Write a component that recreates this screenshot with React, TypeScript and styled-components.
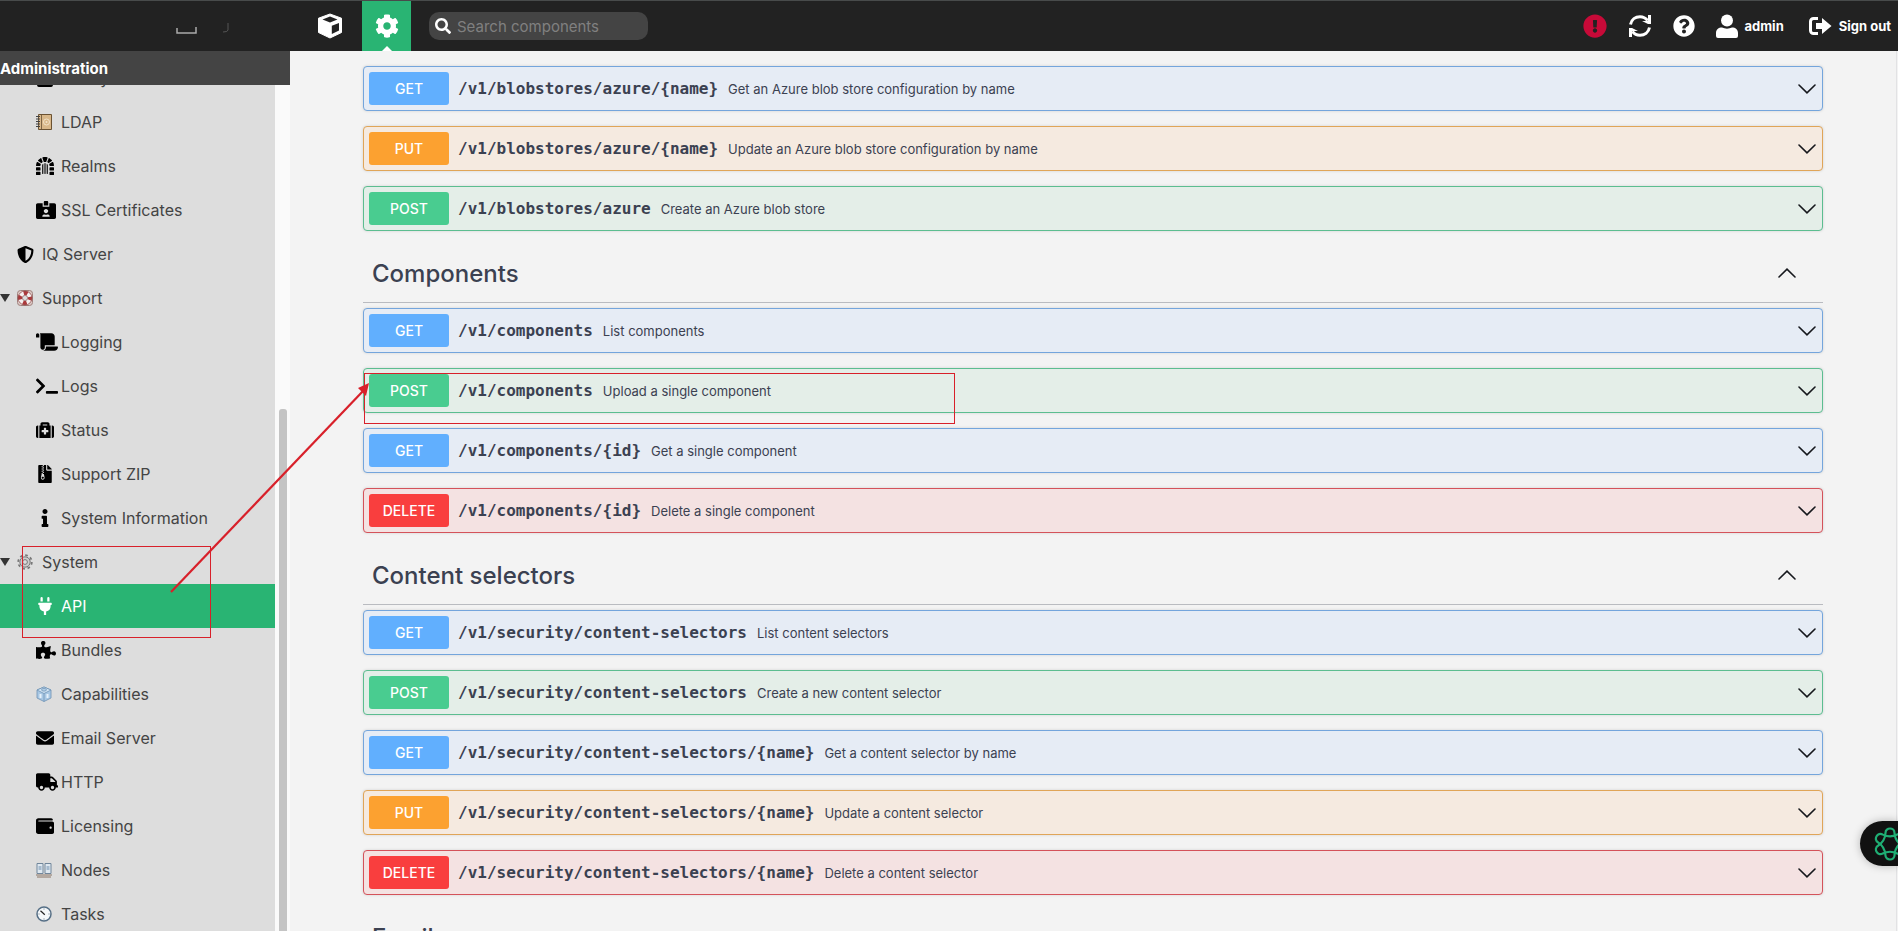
import React from 'react';
import styled, { createGlobalStyle } from 'styled-components';
import {
  FaUser, FaDungeon, FaIdCardAlt, FaShieldAlt, FaScroll, FaTerminal, FaMedkit, FaFileArchive, FaInfo,
  FaPlug, FaPuzzlePiece, FaEnvelope, FaTruck, FaWallet, FaCog, FaSearch, FaExclamationCircle,
  FaQuestionCircle,
} from 'react-icons/fa';

const UI = `Inter, 'Liberation Sans', sans-serif`;
const ACCENT = '#29b473';
const MARK = '#d8202a';

const Global = createGlobalStyle`
  * { box-sizing: border-box; }
  body { margin: 0; background: #f3f3f3; color: #3b4151; font-family: ${UI}; overflow: hidden; }
  button { font: inherit; color: inherit; border: 0; background: none; padding: 0; cursor: pointer; }
`;

const Shell = styled.div`
  position: relative;
  display: grid;
  grid-template-rows: 51px minmax(0, 1fr);
  height: 100vh;
`;

const TopBar = styled.header`
  display: flex;
  align-items: stretch;
  background: #222;
  border-top: 1px solid #484b4b;
  color: #fff;
`;

const Brand = styled.div`
  width: 298px;
  flex: none;
  padding: 8px 0 0 168px;
`;

const ModeTab = styled.button<{ $active?: boolean }>`
  display: flex;
  position: relative;
  width: ${(p) => (p.$active ? 49 : 64)}px;
  align-items: center;
  justify-content: center;
  background: ${(p) => (p.$active ? ACCENT : 'transparent')};
  color: #fff;
  ${(p) => p.$active && `&::after {
    content: '';
    position: absolute;
    bottom: 0;
    border: 5px solid transparent;
    border-top: 0;
    border-bottom-color: #fff;
  }`}
`;

const Search = styled.label`
  display: flex;
  align-items: center;
  align-self: center;
  gap: 6px;
  width: 219px;
  height: 28px;
  margin-left: 18px;
  padding-left: 6px;
  border-radius: 10px;
  background: #444;
`;

const SearchInput = styled.input`
  flex: 1;
  min-width: 0;
  border: 0;
  outline: 0;
  padding: 0;
  background: transparent;
  color: #fff;
  font: 15px ${UI};
  &::placeholder { color: #808080; opacity: 1; }
`;

const Actions = styled.div`
  display: flex;
  align-items: center;
  gap: 21px;
  margin-left: auto;
  padding-right: 7px;
`;

const Action = styled.button`
  display: flex;
  align-items: center;
  gap: 7px;
  font-size: 13px;
  font-weight: 700;
  white-space: nowrap;
  &:last-child { margin-left: 4px; }
`;

const Body = styled.div`
  display: grid;
  grid-template-columns: 290px minmax(0, 1fr);
  min-height: 0;
`;

const Side = styled.aside`
  display: grid;
  grid-template-rows: 34px minmax(0, 1fr);
  min-height: 0;
  background: #fafafa;
`;

const SideTitle = styled.h1`
  margin: 0;
  background: #444;
  color: #fff;
  font-size: 15px;
  font-weight: 700;
  line-height: 36px;
`;

const SideBody = styled.div`
  display: grid;
  grid-template-columns: 275px 8px;
  gap: 4px;
  overflow: hidden;
`;

const NavList = styled.ul`
  margin: -29px 0 0;
  padding: 0;
  list-style: none;
  background: #ddd;
`;

const NavLink = styled.a<{ $top: boolean; $active?: boolean }>`
  display: flex;
  align-items: center;
  height: 44px;
  padding-left: ${(p) => (p.$top ? 0 : 36)}px;
  background: ${(p) => (p.$active ? ACCENT : 'transparent')};
  color: ${(p) => (p.$active ? '#fff' : '#444')};
  font-size: 16px;
  text-decoration: none;
`;

const Twisty = styled.span`
  width: 17px;
  color: #333;
  display: flex;
`;

const NavIcon = styled.span<{ $dark: boolean }>`
  display: flex;
  width: 25px;
  flex: none;
  color: ${(p) => (p.$dark ? '#000' : '#fff')};
`;

const Thumb = styled.div`
  margin-top: 324px;
  border-radius: 3px 3px 0 0;
  background: #c4c4c4;
`;

const Main = styled.main`
  overflow: hidden;
  margin-right: 1px;
  padding: 15px 73px 0;
  border-right: 1px solid #e2e2e4;
`;

const Group = styled.section`
  margin: 0 0 15px;
`;

const GroupHead = styled.h2`
  display: flex;
  align-items: center;
  justify-content: space-between;
  height: 57px;
  margin: 0 0 5px;
  padding: 0 27px 2px 9px;
  border-bottom: 1px solid #b9bbc0;
  font-size: 24px;
  font-weight: 500;
`;

const Operations = styled.div`
  display: flex;
  flex-direction: column;
  gap: 15px;
`;

const Operation = styled.button<{ $line: string; $fill: string }>`
  display: flex;
  align-items: center;
  width: 100%;
  height: 45px;
  padding: 0 6px 0 5px;
  border: 1px solid ${(p) => p.$line};
  border-radius: 4px;
  background: ${(p) => p.$fill};
  box-shadow: 0 0 3px rgba(0, 0, 0, 0.14);
  text-align: left;
`;

const Method = styled.span<{ $color: string }>`
  width: 80px;
  border-radius: 3px;
  background: ${(p) => p.$color};
  color: #fff;
  font-size: 14px;
  font-weight: 500;
  line-height: 33px;
  text-align: center;
`;

const Path = styled.code`
  margin: 0 10px 0 9px;
  font: 700 16px 'DejaVu Sans Mono', monospace;
`;

const Summary = styled.span`
  flex: 1;
  font-size: 13px;
`;

const MarkBox = styled.div<{ $x: number; $y: number; $w: number; $h: number }>`
  position: absolute;
  left: ${(p) => p.$x}px;
  top: ${(p) => p.$y}px;
  width: ${(p) => p.$w}px;
  height: ${(p) => p.$h}px;
  border: 1px solid ${MARK};
  pointer-events: none;
`;

const MarkArrow = styled.svg`
  position: absolute;
  left: 160px;
  top: 370px;
  pointer-events: none;
`;

const Assistant = styled.button`
  position: absolute;
  right: 0;
  bottom: 65px;
  width: 38px;
  height: 45px;
  padding-left: 12px;
  overflow: hidden;
  border-radius: 23px 0 0 23px;
  background: #111;
  box-shadow: 0 0 8px rgba(0, 0, 0, 0.25);
  svg { display: block; }
`;

const Cube = () => (
  <svg width="26" height="26" viewBox="0 0 26 26" aria-hidden="true">
    <path d="M13 1 24.500 5.200V19.500L13 25 1.500 19.500V5.200Z" fill="#fff" stroke="#fff" strokeLinejoin="round" />
    <path d="M13 3.500 20.500 6.400 13 9.400 5.500 6.400Z" fill="#222" />
    <path d="M14.800 12.800 22 9.900V17.600L14.800 21Z" fill="#222" />
  </svg>
);

const Refresh = () => (
  <svg width="24" height="24" viewBox="0 0 24 24" fill="none" stroke="#fff" strokeWidth="3" aria-hidden="true">
    <path d="M2.500 10.500C3.500 5.500 7.500 2.800 12 2.800c3.200 0 5.800 1.400 7.600 3.900M21.500 13.500c-1 5-5 7.700-9.500 7.700-3.200 0-5.800-1.400-7.600-3.900" />
    <path d="M23 1v9h-3l-6-3V7h6V1zM1 23v-9h3l6 3H4v6z" fill="#fff" stroke="none" />
  </svg>
);

const SignOut = () => (
  <svg width="23" height="18" viewBox="0 0 23 18" aria-hidden="true">
    <path d="M9 1.500H4.500a3 3 0 0 0-3 3v9a3 3 0 0 0 3 3H9" fill="none" stroke="#fff" strokeWidth="3" />
    <path d="M7 6h6V1l9.500 8L13 17v-5H7z" fill="#fff" />
  </svg>
);

const Person = () => (
  <svg width="22" height="24" viewBox="0 0 22 24" fill="#fff" aria-hidden="true">
    <circle cx="11" cy="6.500" r="6" />
    <path d="M0 22v-3c0-3.500 2.500-5.500 6-5.500 3 1.500 7 1.500 10 0 3.500 0 6 2 6 5.500v3q0 2-2 2H2q-2 0-2-2z" />
  </svg>
);

const Chevron = ({ up }: { up?: boolean }) => (
  <svg width="18" height="10" viewBox="0 0 18 10" fill="none" stroke="#16181d" strokeWidth="1.600" aria-hidden="true">
    <path d={up ? 'M1 9 9 1.200 17 9' : 'M1 1 9 8.800 17 1'} strokeLinecap="round" />
  </svg>
);

const Book = () => (
  <svg width="16" height="16" viewBox="0 0 16 16" aria-hidden="true">
    <path d="M2.500.500h13v15h-13z" fill="#d9b88a" stroke="#6b5232" />
    <path d="M5.500 1v14" stroke="#7e6545" />
    <path d="M0 2.500h4M0 5h4M0 7.500h4M0 10h4M0 12.500h4" stroke="#444" />
    <circle cx="10.500" cy="8" r="3" fill="none" stroke="#f3e3c8" />
    <circle cx="10.500" cy="8" r="1" fill="#f3e3c8" />
  </svg>
);

const LifeRing = () => (
  <svg width="16" height="16" viewBox="0 0 16 16" aria-hidden="true">
    <rect x=".5" y=".5" width="15" height="15" rx="3" fill="#dccac6" stroke="#a0807c" />
    <circle cx="8" cy="8" r="5" fill="none" stroke="#f4f0f0" strokeWidth="4" />
    <circle cx="8" cy="8" r="5" fill="none" stroke="#ab3a3c" strokeWidth="4" strokeDasharray="3.927 3.927" strokeDashoffset="1.960" />
    <circle cx="8" cy="8" r="2.600" fill="#ddd" stroke="#8a5555" strokeWidth=".6" />
    <circle cx="8" cy="8" r="7" fill="none" stroke="#8e4040" strokeWidth=".7" />
  </svg>
);

const Gear = () => (
  <svg width="16" height="16" viewBox="0 0 16 16" fill="none" stroke="#777" aria-hidden="true">
    <circle cx="8" cy="8" r="6.800" strokeWidth="1.800" strokeDasharray="2.670 2.670" />
    <circle cx="8" cy="8" r="5.200" fill="#ccc" />
    <circle cx="8" cy="8" r="2.400" fill="#ddd" />
  </svg>
);

const Brick = () => (
  <svg width="16" height="16" viewBox="0 0 16 16" stroke="#6f93b5" strokeWidth=".8" aria-hidden="true">
    <path d="M8 1 15 4v8l-7 3.500L1 12V4z" fill="#a9c8e4" />
    <path d="M8 1 15 4 8 7.500 1 4z" fill="#d3e5f4" />
    <path d="M8 7.500v8" />
    <path d="M4.500 8v4M11.500 8v4" stroke="#e5f0fa" strokeWidth="2" />
    <ellipse cx="8" cy="3.800" rx="2.500" ry="1.300" fill="#b6d2ea" />
  </svg>
);

const Servers = () => (
  <svg width="16" height="16" viewBox="0 0 16 16" aria-hidden="true">
    <path d="M1 1.500h6v10H1zM9 1.500h6v10H9z" fill="#dfe8f0" stroke="#71869b" />
    <path d="M2.500 5h3M2.500 7h3M10.500 5h3M10.500 7h3" stroke="#6b8bab" />
    <path d="M0 13h16M1 15h14" stroke="#8a7564" />
  </svg>
);

const Clock = () => (
  <svg width="16" height="16" viewBox="0 0 16 16" fill="none" aria-hidden="true">
    <circle cx="8" cy="8" r="7" fill="#f5f8fa" stroke="#566f86" strokeWidth="1.500" />
    <path d="m4.500 4.800 4.300 4" stroke="#222" strokeWidth="1.200" />
    <path d="M8 2.500v1M8 12.500v1M2.500 8h1M12.500 8h1" stroke="#678" />
  </svg>
);

const Knot = () => (
  <svg width="36" height="36" viewBox="0 0 36 36" fill="none" stroke="#1fae74" strokeWidth="2.200" aria-hidden="true">
    {[0, 60].map((a) => (
      <path
        key={a}
        transform={`rotate(${a} 18 18)`}
        d="M13.500 7C13.500 1 22.500 1 22.500 7Q23 15 29.700 19.500C35 22.500 30.500 30.500 25.300 27.500Q18 24 10.700 27.500C5.500 30.500 1 22.500 6.300 19.500Q13 15 13.500 7Z"
      />
    ))}
  </svg>
);

type NavItem = { label: string; icon: React.ReactNode; top?: boolean; open?: boolean; active?: boolean };

const nav: NavItem[] = [
  { label: 'Anonymous Access', icon: <FaUser size={18} /> },
  { label: 'LDAP', icon: <Book /> },
  { label: 'Realms', icon: <FaDungeon size={18} /> },
  { label: 'SSL Certificates', icon: <FaIdCardAlt size={20} /> },
  { label: 'IQ Server', icon: <FaShieldAlt size={17} />, top: true },
  { label: 'Support', icon: <LifeRing />, top: true, open: true },
  { label: 'Logging', icon: <FaScroll size={22} /> },
  { label: 'Logs', icon: <FaTerminal size={22} /> },
  { label: 'Status', icon: <FaMedkit size={18} /> },
  { label: 'Support ZIP', icon: <FaFileArchive size={18} /> },
  { label: 'System Information', icon: <FaInfo size={18} /> },
  { label: 'System', icon: <Gear />, top: true, open: true },
  { label: 'API', icon: <FaPlug size={18} />, active: true },
  { label: 'Bundles', icon: <FaPuzzlePiece size={20} /> },
  { label: 'Capabilities', icon: <Brick /> },
  { label: 'Email Server', icon: <FaEnvelope size={18} /> },
  { label: 'HTTP', icon: <FaTruck size={22} /> },
  { label: 'Licensing', icon: <FaWallet size={18} /> },
  { label: 'Nodes', icon: <Servers /> },
  { label: 'Tasks', icon: <Clock /> },
];

const tones = {
  GET: { color: '#61affe', line: '#74a5dc', fill: '#e6ecf5' },
  PUT: { color: '#fca130', line: '#e0a558', fill: '#f5eae0' },
  POST: { color: '#49cc90', line: '#5cbd90', fill: '#e4eee8' },
  DELETE: { color: '#f93e3e', line: '#d4525a', fill: '#f4e2e2' },
};

type Op = [keyof typeof tones, string, string];

const groups: { title?: string; ops: Op[] }[] = [
  {
    ops: [
      ['GET', '/v1/blobstores/azure/{name}', 'Get an Azure blob store configuration by name'],
      ['PUT', '/v1/blobstores/azure/{name}', 'Update an Azure blob store configuration by name'],
      ['POST', '/v1/blobstores/azure', 'Create an Azure blob store'],
    ],
  },
  {
    title: 'Components',
    ops: [
      ['GET', '/v1/components', 'List components'],
      ['POST', '/v1/components', 'Upload a single component'],
      ['GET', '/v1/components/{id}', 'Get a single component'],
      ['DELETE', '/v1/components/{id}', 'Delete a single component'],
    ],
  },
  {
    title: 'Content selectors',
    ops: [
      ['GET', '/v1/security/content-selectors', 'List content selectors'],
      ['POST', '/v1/security/content-selectors', 'Create a new content selector'],
      ['GET', '/v1/security/content-selectors/{name}', 'Get a content selector by name'],
      ['PUT', '/v1/security/content-selectors/{name}', 'Update a content selector'],
      ['DELETE', '/v1/security/content-selectors/{name}', 'Delete a content selector'],
    ],
  },
  { title: 'Email', ops: [] },
];

export default function App() {
  return (
    <>
      <Global />
      <Shell>
        <TopBar>
          <Brand>
            <svg width="70" height="32" viewBox="0 0 70 32" fill="none" aria-hidden="true">
              <path d="M9 19v5h19v-6" stroke="#aaa" strokeWidth="1.500" />
              <path d="M60 14v7q0 2-5 2" stroke="#555" />
            </svg>
          </Brand>
          <ModeTab aria-label="Browse"><Cube /></ModeTab>
          <ModeTab $active aria-label="Administration"><FaCog size={24} /></ModeTab>
          <Search>
            <FaSearch size={16} />
            <SearchInput type="search" placeholder="Search components" aria-label="Search components" />
          </Search>
          <Actions>
            <Action aria-label="System status"><FaExclamationCircle size={24} color="#c70a38" /></Action>
            <Action aria-label="Refresh"><Refresh /></Action>
            <Action aria-label="Help"><FaQuestionCircle size={22} /></Action>
            <Action><Person />admin</Action>
            <Action><SignOut />Sign out</Action>
          </Actions>
        </TopBar>
        <Body>
          <Side>
            <SideTitle>Administration</SideTitle>
            <SideBody>
              <NavList>
                {nav.map((n) => (
                  <li key={n.label}>
                    <NavLink href="#" $top={!!n.top} $active={n.active}>
                      {n.top && (
                        <Twisty>
                          {n.open && (
                            <svg width="10" height="8" viewBox="0 0 10 8" aria-hidden="true">
                              <path d="M0 0h10L5 8z" fill="currentColor" />
                            </svg>
                          )}
                        </Twisty>
                      )}
                      <NavIcon $dark={!n.active}>{n.icon}</NavIcon>
                      {n.label}
                    </NavLink>
                  </li>
                ))}
              </NavList>
              <Thumb />
            </SideBody>
          </Side>
          <Main>
            {groups.map((g, i) => (
              <Group key={i}>
                {g.title && <GroupHead>{g.title}<Chevron up /></GroupHead>}
                <Operations>
                  {g.ops.map(([method, path, text]) => (
                    <Operation key={method + path} $line={tones[method].line} $fill={tones[method].fill}>
                      <Method $color={tones[method].color}>{method}</Method>
                      <Path>{path}</Path>
                      <Summary>{text}</Summary>
                      <Chevron />
                    </Operation>
                  ))}
                </Operations>
              </Group>
            ))}
          </Main>
        </Body>
        <MarkBox $x={22} $y={546} $w={189} $h={92} />
        <MarkBox $x={364} $y={373} $w={591} $h={51} />
        <MarkArrow width="215" height="230" viewBox="0 0 215 230" aria-hidden="true">
          <path d="M11 222 204 20" stroke={MARK} strokeWidth="2.200" />
          <path d="M209 13 206 26 198 18z" fill={MARK} />
        </MarkArrow>
        <Assistant aria-label="Assistant"><Knot /></Assistant>
      </Shell>
    </>
  );
}
